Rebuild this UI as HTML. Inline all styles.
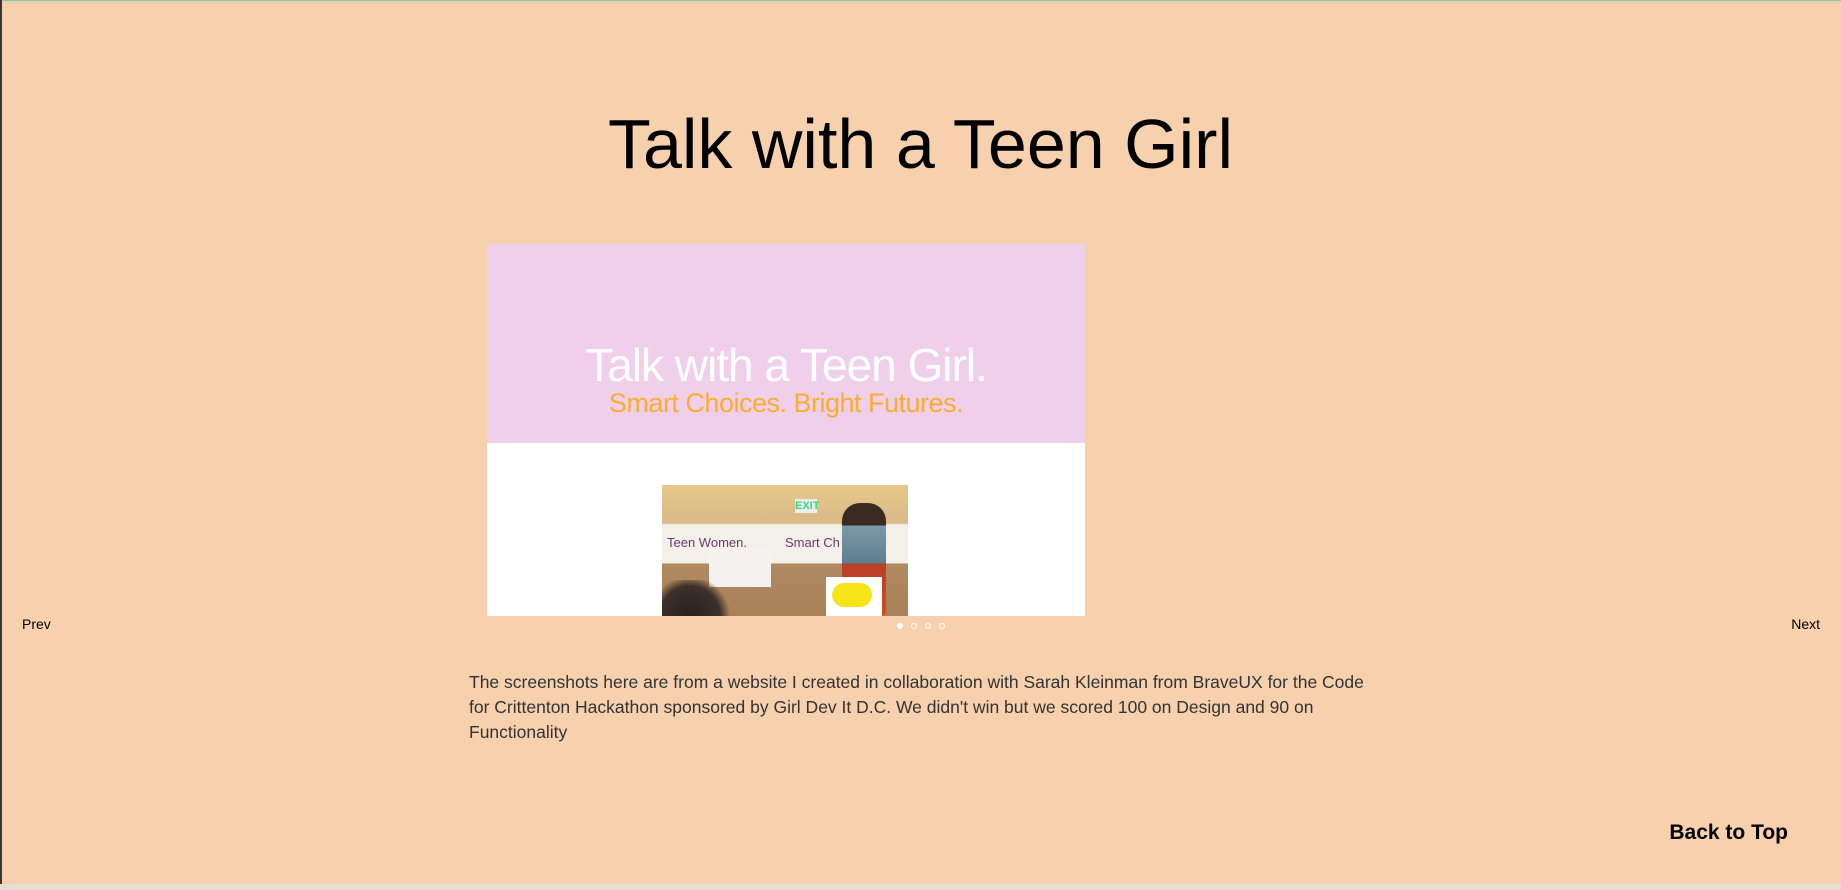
<!DOCTYPE html>
<html><head><meta charset="utf-8"><style>
html,body{margin:0;padding:0;width:1841px;height:890px;overflow:hidden;background:#f7d0ae;font-family:"Liberation Sans",sans-serif;}
.topline{position:absolute;left:0;top:0;width:1841px;height:1px;background:#86c8b0;}
.leftline{position:absolute;left:0;top:0;width:2px;height:884px;background:#3a3533;}
.bottom{position:absolute;left:0;top:884px;width:1841px;height:6px;background:#e8ddd5;}
h1{position:absolute;left:0;width:1841px;top:104px;margin:0;text-align:center;font-weight:normal;font-size:70px;line-height:80px;color:#000;}
.slide{position:absolute;left:487px;top:244px;width:598px;height:372px;background:#fff;overflow:hidden;}
.pink{position:absolute;left:0;top:0;width:598px;height:199px;background:#efcfea;}
.t1{position:absolute;left:0;width:598px;top:96px;text-align:center;color:#fff;font-size:46px;font-weight:300;letter-spacing:-1px;line-height:50px;}
.t2{position:absolute;left:0;width:598px;top:143px;text-align:center;color:#f9ae2e;font-size:27px;line-height:32px;letter-spacing:-0.5px;}
.photo{position:absolute;left:175px;top:241px;width:246px;height:131px;background:linear-gradient(#e6c98c 0,#d9b985 38px,#f3efe9 40px,#f3efe9 78px,#b08a62 79px,#a98058 131px);overflow:hidden;}
.photo .exit{position:absolute;left:133px;top:14px;width:22px;height:14px;background:#eee;color:#2fe07a;font-size:11px;font-weight:bold;text-align:center;line-height:14px;}
.photo .tw{position:absolute;left:5px;top:50px;color:#6b3a6b;font-size:13px;}
.photo .sc{position:absolute;left:123px;top:50px;color:#6b3a6b;font-size:13px;}
.photo .card{position:absolute;left:47px;top:62px;width:62px;height:40px;background:#f4f1ee;}
.photo .person{position:absolute;left:180px;top:18px;width:44px;height:113px;background:linear-gradient(#3b2a24 0,#3b2a24 22px,#7a9aa8 23px,#5d7e8c 60px,#b8402a 61px,#d44a20 113px);border-radius:18px 18px 4px 4px;}
.photo .sign{position:absolute;left:164px;top:92px;width:56px;height:39px;background:#fff;}
.photo .sign i{position:absolute;left:6px;top:6px;width:40px;height:24px;background:#f6e419;border-radius:12px;}
.photo .head{position:absolute;left:0;top:95px;width:70px;height:60px;background:radial-gradient(circle at 40% 60%,#2a211d 0,#3c302b 30px,rgba(60,48,43,0) 40px);}
.dots{position:absolute;top:623px;left:897px;}
.dots span{position:absolute;top:0;width:4px;height:4px;border:1.5px solid #fff;border-radius:50%;}
.nav{position:absolute;top:616px;font-size:14px;color:#000;}
p{position:absolute;left:469px;top:670px;width:912px;margin:0;font-size:17.5px;line-height:25px;color:#333;}
.btt{position:absolute;right:53px;top:821px;font-weight:bold;font-size:21px;color:#000;}
</style></head><body>
<div class="topline"></div><div class="leftline"></div><div class="bottom"></div>
<h1>Talk with a Teen Girl</h1>
<div class="slide">
  <div class="pink"><div class="t1">Talk with a Teen Girl.</div><div class="t2">Smart Choices. Bright Futures.</div></div>
  <div class="photo">
    <div class="exit">EXIT</div>
    <div class="tw">Teen Women.</div><div class="sc">Smart Ch</div>
    <div class="card"></div>
    <div class="person"></div>
    <div class="sign"><i></i></div>
    <div class="head"></div>
  </div>
</div>
<div class="dots"><span style="left:0;background:#fff"></span><span style="left:14px"></span><span style="left:28px"></span><span style="left:42px"></span></div>
<div class="nav" style="left:22px">Prev</div>
<div class="nav" style="right:21px">Next</div>
<p>The screenshots here are from a website I created in collaboration with Sarah Kleinman from BraveUX for the Code for Crittenton Hackathon sponsored by Girl Dev It D.C. We didn't win but we scored 100 on Design and 90 on Functionality</p>
<div class="btt">Back to Top</div>
</body></html>
